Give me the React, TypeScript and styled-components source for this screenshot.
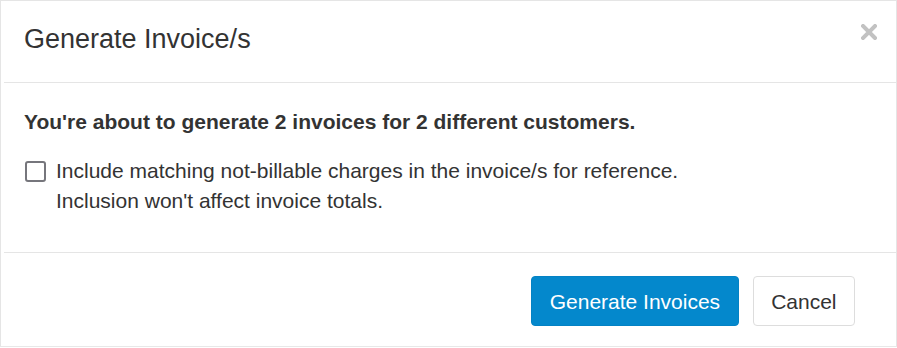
import React, { useState } from 'react';
import styled, { createGlobalStyle } from 'styled-components';

const GlobalStyle = createGlobalStyle`
  html, body {
    margin: 0;
    padding: 0;
    background: #ffffff;
  }
  body {
    font-family: 'Liberation Sans', Arial, sans-serif;
    color: #333333;
    -webkit-font-smoothing: antialiased;
  }
`;

const Modal = styled.div`
  width: 897px;
  height: 347px;
  box-sizing: border-box;
  border: 1px solid #e5e5e5;
  border-bottom-color: #e8e8e8;
  background: #fff;
  display: flex;
  flex-direction: column;
`;

const Header = styled.header`
  height: 81px;
  display: flex;
  justify-content: space-between;
  align-items: center;
  padding: 0 19px 0 23px;
`;

const Title = styled.h4`
  margin: 0 0 4px;
  font-size: 27px;
  font-weight: 400;
  line-height: 1.1;
  color: #333;
`;

const CloseButton = styled.button`
  align-self: flex-start;
  margin-top: 23px;
  padding: 0;
  border: 0;
  background: none;
  width: 16px;
  height: 16px;
  cursor: pointer;
  display: flex;
`;

const Rule = styled.div`
  height: 1px;
  margin-left: 3px;
  background: #e5e5e5;
`;

const Body = styled.div`
  flex: 1;
  padding: 24px 23px 0;
`;

const Lead = styled.p`
  margin: 0 0 19px;
  font-size: 21px;
  font-weight: 700;
  line-height: 30px;
  color: #333;
`;

const CheckRow = styled.label`
  display: flex;
  align-items: flex-start;
  gap: 10px;
  font-size: 21px;
  line-height: 30px;
  color: #333;
  cursor: pointer;
`;

const Box = styled.input.attrs({ type: 'checkbox' })`
  appearance: none;
  flex: none;
  box-sizing: border-box;
  width: 21px;
  height: 21px;
  margin: 5px 0 0 1px;
  border: 2px solid #76767c;
  border-radius: 3px;
  background: #fff;
  cursor: pointer;

  &:checked {
    background: #0488cc;
    border-color: #0488cc;
  }
`;

const Footer = styled.footer`
  height: 93px;
  box-sizing: border-box;
  display: flex;
  justify-content: flex-end;
  align-items: flex-start;
  gap: 14px;
  padding: 23px 41px 0 0;
`;

const Button = styled.button<{ $primary?: boolean }>`
  height: 50px;
  box-sizing: border-box;
  padding: 0 17.5px;
  font-family: 'Liberation Sans', Arial, sans-serif;
  font-size: 21px;
  line-height: 1;
  border-radius: 4px;
  cursor: pointer;
  border: 1px solid ${(p) => (p.$primary ? '#0482c4' : '#dddddd')};
  background: ${(p) => (p.$primary ? '#0488cc' : '#ffffff')};
  color: ${(p) => (p.$primary ? '#ffffff' : '#333333')};
`;

const App: React.FC = () => {
  const [includeCharges, setIncludeCharges] = useState(false);

  return (
    <>
      <GlobalStyle />
      <Modal>
        <Header>
          <Title>Generate Invoice/s</Title>
          <CloseButton aria-label="Close">
            <svg width="16" height="16" viewBox="0 0 16 16">
              <path d="M2 2 L14 14 M14 2 L2 14" stroke="#c2c2c2" strokeWidth="4" strokeLinecap="square" />
            </svg>
          </CloseButton>
        </Header>
        <Rule />
        <Body>
          <Lead>You're about to generate 2 invoices for 2 different customers.</Lead>
          <CheckRow>
            <Box checked={includeCharges} onChange={(e) => setIncludeCharges(e.target.checked)} />
            <span>
              Include matching not-billable charges in the invoice/s for reference.
              <br />
              Inclusion won't affect invoice totals.
            </span>
          </CheckRow>
        </Body>
        <Rule />
        <Footer>
          <Button $primary>Generate Invoices</Button>
          <Button>Cancel</Button>
        </Footer>
      </Modal>
    </>
  );
};

export default App;
